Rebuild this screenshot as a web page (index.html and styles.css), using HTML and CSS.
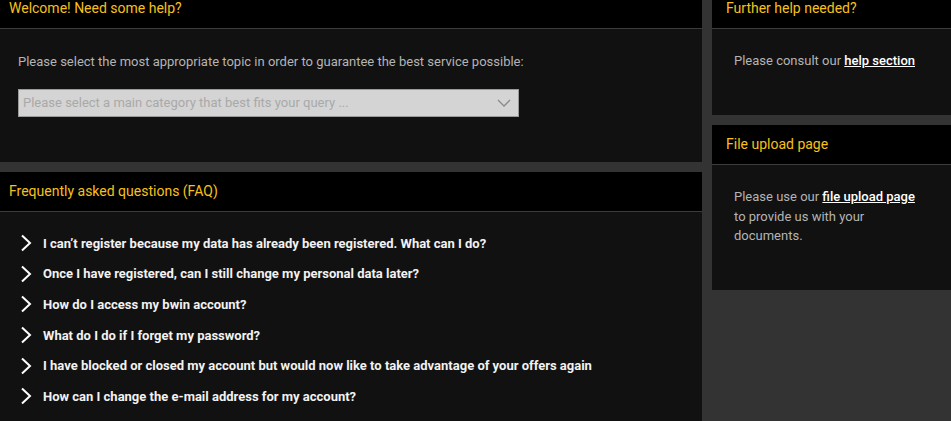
FILE: index.html
```html
<!DOCTYPE html>
<html lang="en">
<head>
    <meta charset="UTF-8">
    <title>Help &amp; Contact</title>
    <link rel="stylesheet" href="styles.css">
</head>
<body>

<div class="page">

    <!-- Venstre kolonne -->
    <div class="col col-main">
        <div class="panel">
            <div class="panel-head">Welcome! Need some help?</div>
            <div class="panel-body main-body">
                <p class="intro">Please select the most appropriate topic in order to guarantee the best service possible:</p>
                <div class="select">
                    <span>Please select a main category that best fits your query ...</span>
                    <svg width="14" height="8" viewBox="0 0 14 8"><path d="M1 1l6 6 6-6" fill="none" stroke="#8a8a8a" stroke-width="1.3"/></svg>
                </div>
            </div>
        </div>

        <div class="panel panel-grow">
            <div class="panel-head">Frequently asked questions (FAQ)</div>
            <ul class="faq">
                <li><svg class="chev" width="12" height="18" viewBox="0 0 12 18"><path d="M2 1.5l8 7.5-8 7.5" fill="none" stroke="#fff" stroke-width="2"/></svg>I can’t register because my data has already been registered. What can I do?</li>
                <li><svg class="chev" width="12" height="18" viewBox="0 0 12 18"><path d="M2 1.5l8 7.5-8 7.5" fill="none" stroke="#fff" stroke-width="2"/></svg>Once I have registered, can I still change my personal data later?</li>
                <li><svg class="chev" width="12" height="18" viewBox="0 0 12 18"><path d="M2 1.5l8 7.5-8 7.5" fill="none" stroke="#fff" stroke-width="2"/></svg>How do I access my bwin account?</li>
                <li><svg class="chev" width="12" height="18" viewBox="0 0 12 18"><path d="M2 1.5l8 7.5-8 7.5" fill="none" stroke="#fff" stroke-width="2"/></svg>What do I do if I forget my password?</li>
                <li><svg class="chev" width="12" height="18" viewBox="0 0 12 18"><path d="M2 1.5l8 7.5-8 7.5" fill="none" stroke="#fff" stroke-width="2"/></svg>I have blocked or closed my account but would now like to take advantage of your offers again</li>
                <li><svg class="chev" width="12" height="18" viewBox="0 0 12 18"><path d="M2 1.5l8 7.5-8 7.5" fill="none" stroke="#fff" stroke-width="2"/></svg>How can I change the e-mail address for my account?</li>
            </ul>
        </div>
    </div>

    <!-- Højre kolonne -->
    <div class="col col-side">
        <div class="panel">
            <div class="panel-head side-head">Further help needed?</div>
            <div class="panel-body side-body">
                <p class="single">Please consult our <a href="#">help section</a></p>
            </div>
        </div>
        <div class="panel">
            <div class="panel-head side-head">File upload page</div>
            <div class="panel-body side-body">
                <p>Please use our <a href="#">file upload page</a> to provide us with your documents.</p>
            </div>
        </div>
    </div>

</div>

</body>
</html>
```

FILE: styles.css
```css
/* Generel styling */
body {
    margin: 0;
    background-color: #333;
    font-family: Roboto, "Liberation Sans", sans-serif;
    overflow: hidden;
}

.page {
    display: flex;
    gap: 10px;
    margin-top: -11px; /* siden er rullet lidt ned */
    height: 432px;
}

.col {
    display: flex;
    flex-direction: column;
    gap: 10px;
}

.col-main {
    width: 702px;
}

.col-side {
    width: 239px;
}

/* Paneler */
.panel {
    background-color: #111;
}

.panel-grow {
    flex: 1;
}

.panel-head {
    background-color: #000;
    color: #f7c01a;
    font-size: 14px;
    line-height: 39px;
    padding-left: 9px;
    border-bottom: 1px solid #3c3c3c;
}

.side-head {
    padding-left: 14px;
}

.panel-body {
    padding: 23px 18px 44px;
    color: #b4b4b4;
    font-size: 13px;
    line-height: 20px;
}

.main-body {
    padding-bottom: 45px;
}

.panel-body p {
    margin: 0;
}

.intro {
    margin-bottom: 17px !important;
}

/* Dropdown */
.select {
    width: 488px;
    height: 26px;
    background-color: #d4d4d4;
    border: 1px solid #9a9a9a;
    display: flex;
    align-items: center;
    justify-content: space-between;
    padding: 0 7px 0 4px;
    color: #a9a9a9;
    font-size: 13px;
}

.select span {
    white-space: nowrap;
}

/* FAQ liste */
.faq {
    list-style: none;
    margin: 0;
    padding: 16px 0 0 20px;
}

.faq li {
    display: flex;
    align-items: center;
    gap: 11px;
    color: #f2f2f2;
    font-size: 13px;
    font-weight: bold;
    height: 30.6px;
}

.chev {
    flex: none;
}

/* Højre kolonne */
.side-body {
    padding: 22px 36px 44px 22px;
    line-height: 19.5px;
}

.side-body .single {
    line-height: 20px;
}

.side-body a {
    color: #fff;
    font-weight: 500;
    text-decoration: underline;
}
```
